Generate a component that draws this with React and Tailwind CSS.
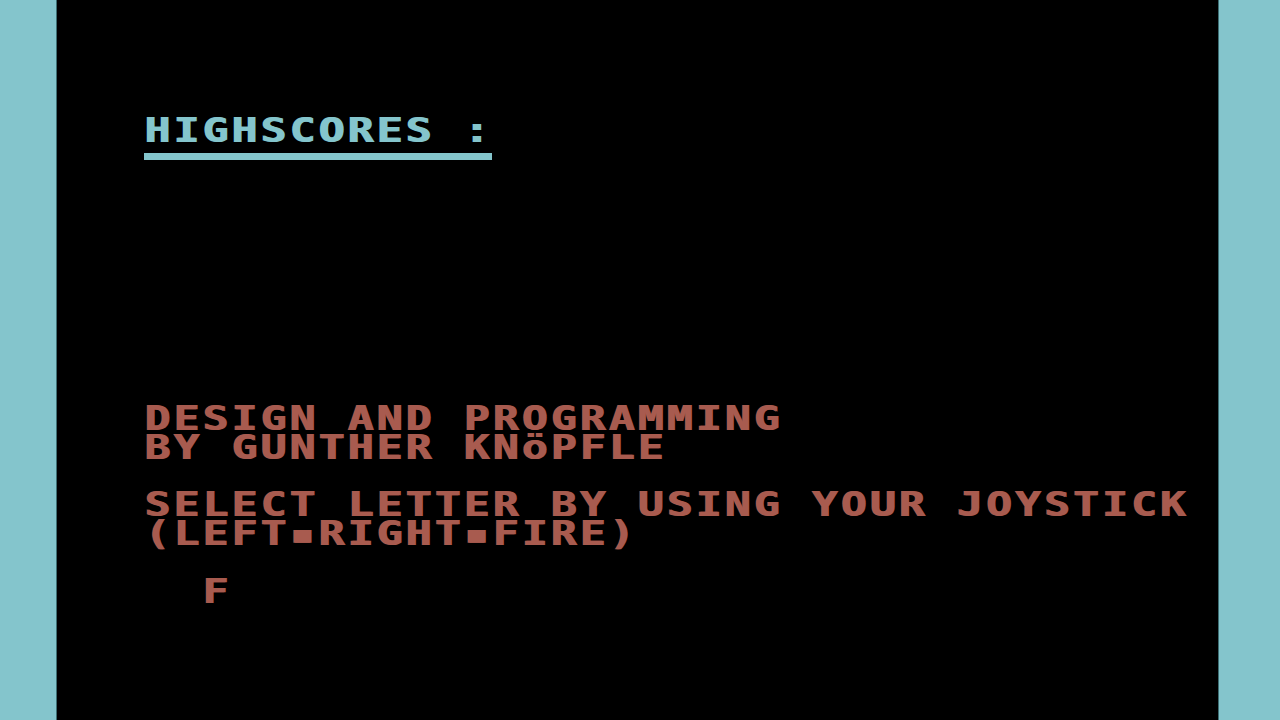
export default function App() {
  const font = { fontFamily: '"DejaVu Sans Mono", "Liberation Mono", monospace' };
  const Row = ({ children, color = "text-[#a85b4f]" }) => (
    <div className="h-[28.8px] shrink-0 leading-[28.8px] whitespace-pre">
      <span
        className={`inline-block h-[28.8px] origin-left scale-x-[1.3] text-[33px] font-bold tracking-[2.45px] [text-shadow:1.2px_0_0_currentColor] ${color}`}
        style={font}
      >
        {children}
      </span>
    </div>
  );
  return (
    <div className="flex w-[1280px] h-[720px] bg-[#84c5cc] overflow-hidden">
      <div className="w-[57px] shrink-0 border-r border-[#3d6e73]" />
      <div className="w-[1161px] shrink-0 bg-black pl-[87px] flex flex-col overflow-hidden">
        <div className="h-[117px] shrink-0" />
        <Row color="text-[#84c5cc]">HIGHSCORES :</Row>
        <div className="h-[28.8px] shrink-0 pt-[7px]">
          <div className="w-[348px] h-[7px] bg-[#84c5cc]" />
        </div>
        <div className="h-[230.4px] shrink-0" />
        <Row>DESIGN AND PROGRAMMING</Row>
        <Row>BY GUNTHER KNöPFLE</Row>
        <div className="h-[28.8px] shrink-0" />
        <Row>SELECT LETTER BY USING YOUR JOYSTICK</Row>
        <Row>(LEFT▪RIGHT▪FIRE)</Row>
        <div className="h-[28.8px] shrink-0" />
        <Row>  F</Row>
      </div>
      <div className="flex-1 border-l border-[#3d6e73]" />
    </div>
  );
}
